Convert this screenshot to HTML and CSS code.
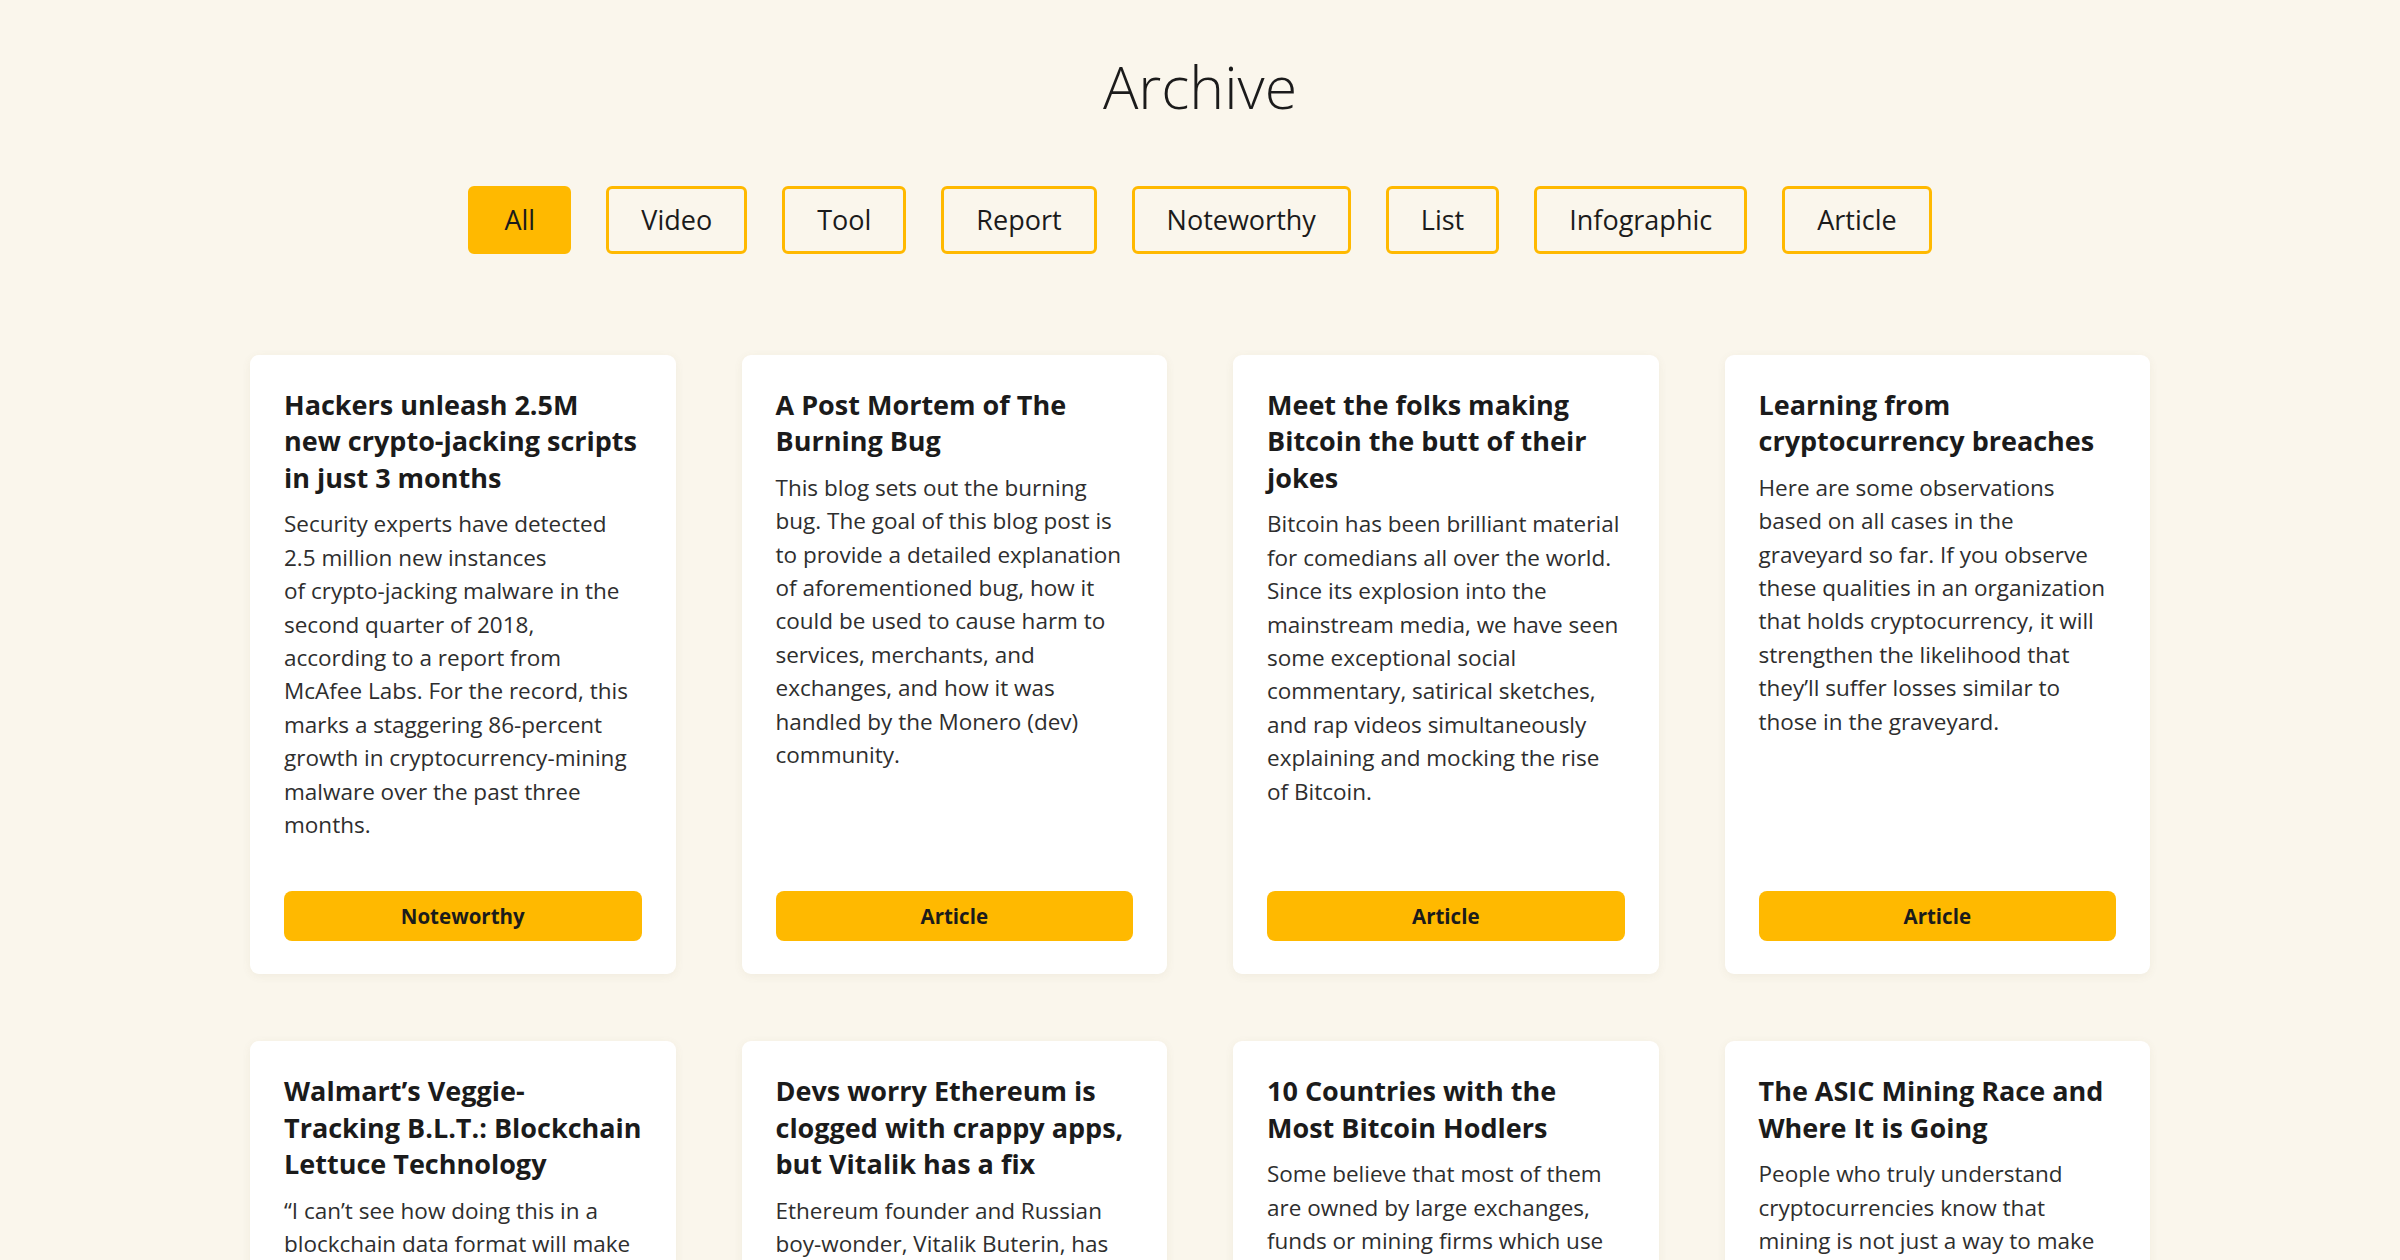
FILE: index.html
```html
<!DOCTYPE html>
<html lang="en">
<head>
<meta charset="utf-8">
<title>Archive</title>
<link rel="stylesheet" href="styles.css">
</head>
<body>
<main class="archive">
  <h1 class="archive-title">Archive</h1>

  <nav class="filters">
    <button class="filter filter-all is-active">All</button>
    <button class="filter">Video</button>
    <button class="filter">Tool</button>
    <button class="filter">Report</button>
    <button class="filter">Noteworthy</button>
    <button class="filter">List</button>
    <button class="filter">Infographic</button>
    <button class="filter">Article</button>
  </nav>

  <section class="grid">
    <article class="card">
      <h2 class="card-title">Hackers unleash 2.5M<br>new crypto-jacking scripts in just 3 months</h2>
      <p class="card-text">Security experts have detected 2.5&nbsp;million new instances<br>of crypto-jacking malware in the second quarter of 2018, according to a report from McAfee Labs. For the record, this marks a staggering 86-percent growth in cryptocurrency-mining malware over the past three months.</p>
      <a class="card-tag" href="#">Noteworthy</a>
    </article>

    <article class="card">
      <h2 class="card-title">A Post Mortem of The Burning Bug</h2>
      <p class="card-text">This blog sets out the burning bug. The goal of this blog post is to provide a detailed explanation of aforementioned bug, how it could be used to cause harm to services, merchants, and exchanges, and how it was handled by the Monero (dev) community.</p>
      <a class="card-tag" href="#">Article</a>
    </article>

    <article class="card">
      <h2 class="card-title">Meet the folks making Bitcoin the butt of their jokes</h2>
      <p class="card-text">Bitcoin has been brilliant material for comedians all over the world. Since its explosion into the mainstream media, we have seen some exceptional social commentary, satirical sketches, and rap videos simultaneously explaining and mocking the rise of Bitcoin.</p>
      <a class="card-tag" href="#">Article</a>
    </article>

    <article class="card">
      <h2 class="card-title">Learning from cryptocurrency breaches</h2>
      <p class="card-text">Here are some observations based on all cases in the graveyard so far. If you observe these qualities in an organization that holds cryptocurrency, it will strengthen the likelihood that they’ll suffer losses similar to those in the graveyard.</p>
      <a class="card-tag" href="#">Article</a>
    </article>

    <article class="card">
      <h2 class="card-title">Walmart’s Veggie-<br>Tracking B.L.T.: Blockchain Lettuce Technology</h2>
      <p class="card-text">“I can’t see how doing this in a blockchain data format will make anything better than a regular database would,” said one supply-chain analyst about the retailer’s new leafy-greens tracking pilot.</p>
      <a class="card-tag" href="#">Article</a>
    </article>

    <article class="card">
      <h2 class="card-title">Devs worry Ethereum is clogged with crappy apps, but Vitalik has a fix</h2>
      <p class="card-text">Ethereum founder and Russian boy-wonder, Vitalik Buterin, has proposed a way to keep the network from grinding to a halt under the weight of spam contracts and idle dapps.</p>
      <a class="card-tag" href="#">Article</a>
    </article>

    <article class="card">
      <h2 class="card-title">10 Countries with the Most Bitcoin Hodlers</h2>
      <p class="card-text">Some believe that most of them are owned by large exchanges, funds or mining firms which use them as cold storage, while others point to a long tail of individual holders around the globe.</p>
      <a class="card-tag" href="#">List</a>
    </article>

    <article class="card">
      <h2 class="card-title">The ASIC Mining Race and Where It is Going</h2>
      <p class="card-text">People who truly understand cryptocurrencies know that mining is not just a way to make money, it is the backbone that keeps a proof-of-work network honest and secure.</p>
      <a class="card-tag" href="#">Report</a>
    </article>
  </section>
</main>
</body>
</html>
```

FILE: styles.css
```css
* {
  box-sizing: border-box;
}

html,
body {
  margin: 0;
  padding: 0;
}

body {
  background: #faf6ec;
  color: #1b1b1b;
  font-family: "Open Sans", "Noto Sans", sans-serif;
}

.archive {
  padding: 51px 0 80px;
}

.archive-title {
  margin: 0;
  text-align: center;
  font-size: 59px;
  font-weight: 300;
  line-height: 1.2;
  color: #1b1b1b;
}

/* category filter row */
.filters {
  display: flex;
  justify-content: center;
  gap: 35px;
  margin-top: 64px;
}

.filter {
  font-family: inherit;
  font-size: 27px;
  font-weight: 400;
  line-height: 38px;
  color: #1b1b1b;
  background: transparent;
  border: 3px solid #ffb900;
  border-radius: 6px;
  padding: 12px 32px;
  cursor: pointer;
}

.filter-all {
  min-width: 103px;
}

.filter.is-active {
  background: #ffb900;
}

/* card grid */
.grid {
  width: 1900px;
  margin: 101px auto 0;
  display: grid;
  grid-template-columns: repeat(4, 1fr);
  column-gap: 66px;
  row-gap: 67px;
}

.card {
  display: flex;
  flex-direction: column;
  background: #fff;
  border-radius: 9px;
  padding: 32px 34px 33px 34px;
  box-shadow: 0 2px 10px rgba(120, 100, 60, 0.07);
}

.card-title {
  margin: 0 -3px 0 0;
  font-size: 27px;
  font-weight: 700;
  line-height: 36.5px;
  color: #1b1b1b;
}

.card-text {
  flex: 1 0 auto;
  margin: 11px 0 0;
  font-size: 22.5px;
  line-height: 33.4px;
  color: #2e2e2e;
}

.card-tag {
  display: block;
  margin-top: 50px;
  height: 50px;
  line-height: 50px;
  text-align: center;
  background: #ffb900;
  border-radius: 8px;
  color: #1b1b1b;
  font-size: 20.5px;
  font-weight: 700;
  text-decoration: none;
}
```
